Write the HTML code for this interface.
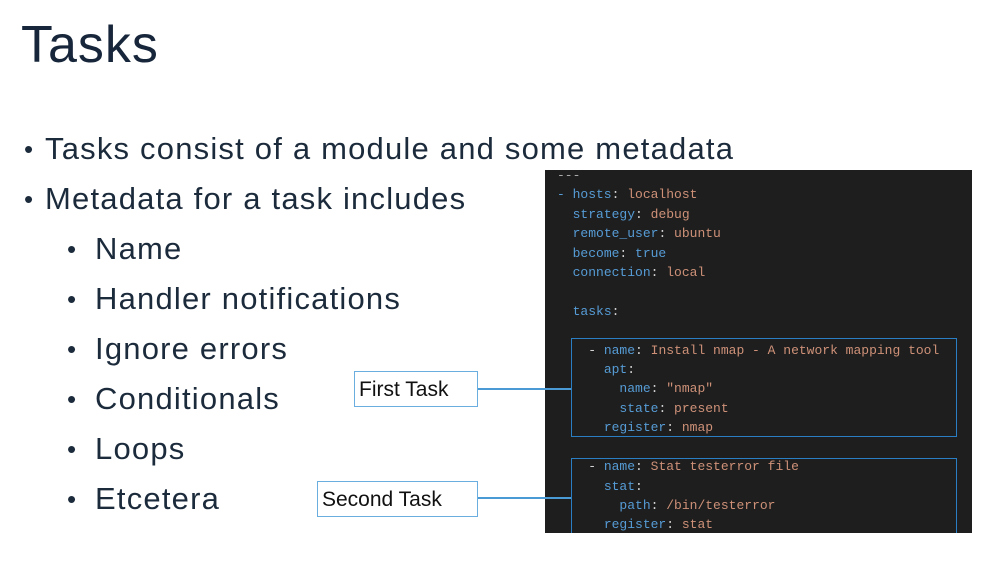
<!DOCTYPE html>
<html><head><meta charset="utf-8"><style>
html,body{margin:0;padding:0;background:#fff;width:988px;height:564px;overflow:hidden;position:relative;font-family:"Liberation Sans",sans-serif;color:#1c2b3c}
.t{position:absolute;white-space:nowrap}
h1{position:absolute;left:21px;top:15px;margin:0;font-weight:normal;font-size:52px;color:#17263a;letter-spacing:1px}
.b{font-size:31px;letter-spacing:1.2px}
.d{position:absolute;font-size:26px}
#code{position:absolute;left:545px;top:170px;width:427px;height:363px;background:#1e1e1e;overflow:hidden}
.c{position:absolute;font-family:"Liberation Mono",monospace;font-size:13px;white-space:pre;color:#d4d4d4;line-height:19.4px}
.k{color:#569cd6}.v{color:#ce9178}
.box{position:absolute;border:1.5px solid #2a7fc4}
.lab{position:absolute;border:1.5px solid #6aaee0;background:#fff;font-size:21px;color:#111;box-sizing:border-box;padding:6px 0 0 4px}
.ln{position:absolute;height:1.5px;background:#4a9ad6}
</style></head><body>
<h1>Tasks</h1>
<div class="d" style="left:24px;top:134px">•</div><div class="t b" style="left:45px;top:131px">Tasks consist of a module and some metadata</div>
<div class="d" style="left:24px;top:184px">•</div><div class="t b" style="left:45px;top:181px">Metadata for a task includes</div>
<div class="d" style="left:67px;top:234px">•</div><div class="t b" style="left:95px;top:231px">Name</div>
<div class="d" style="left:67px;top:284px">•</div><div class="t b" style="left:95px;top:281px">Handler notifications</div>
<div class="d" style="left:67px;top:334px">•</div><div class="t b" style="left:95px;top:331px">Ignore errors</div>
<div class="d" style="left:67px;top:384px">•</div><div class="t b" style="left:95px;top:381px">Conditionals</div>
<div class="d" style="left:67px;top:434px">•</div><div class="t b" style="left:95px;top:431px">Loops</div>
<div class="d" style="left:67px;top:484px">•</div><div class="t b" style="left:95px;top:481px">Etcetera</div>
<div id="code">
<div class="c" style="left:12px;top:-4px"><span style="color:#aaa">---</span>
<span class="k">- hosts</span>: <span class="v">localhost</span>
  <span class="k">strategy</span>: <span class="v">debug</span>
  <span class="k">remote_user</span>: <span class="v">ubuntu</span>
  <span class="k">become</span>: <span class="k">true</span>
  <span class="k">connection</span>: <span class="v">local</span>

  <span class="k">tasks</span>:

    - <span class="k">name</span>: <span class="v">Install nmap - A network mapping tool</span>
      <span class="k">apt</span>:
        <span class="k">name</span>: <span class="v">"nmap"</span>
        <span class="k">state</span>: <span class="v">present</span>
      <span class="k">register</span>: <span class="v">nmap</span>

    - <span class="k">name</span>: <span class="v">Stat testerror file</span>
      <span class="k">stat</span>:
        <span class="k">path</span>: <span class="v">/bin/testerror</span>
      <span class="k">register</span>: <span class="v">stat</span></div>
<div class="box" style="left:26px;top:168px;width:384px;height:97px"></div>
<div class="box" style="left:26px;top:288px;width:384px;height:80px"></div>
</div>
<div class="ln" style="left:477px;top:388px;width:94px"></div>
<div class="ln" style="left:477px;top:497px;width:94px"></div>
<div class="lab" style="left:354px;top:371px;width:124px;height:36px">First Task</div>
<div class="lab" style="left:317px;top:481px;width:161px;height:36px">Second Task</div>
</body></html>
